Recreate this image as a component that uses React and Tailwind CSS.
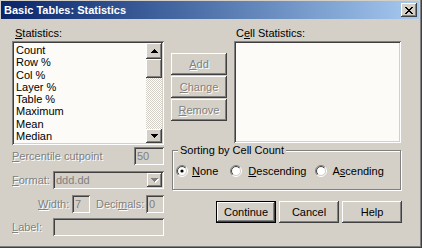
import React from 'react';

const FACE = 'bg-[#d4d0c8]';
const RAISED = 'shadow-[inset_-1px_-1px_0_#404040,inset_1px_1px_0_#ffffff,inset_-2px_-2px_0_#808080,inset_2px_2px_0_#d4d0c8]';
const SUNKEN = 'shadow-[inset_1px_1px_0_#808080,inset_-1px_-1px_0_#ffffff,inset_2px_2px_0_#404040,inset_-2px_-2px_0_#d4d0c8]';
const DIM = 'text-[#808080] [text-shadow:1px_1px_0_#ffffff]';

const STATS = ['Count', 'Row %', 'Col %', 'Layer %', 'Table %', 'Maximum', 'Mean', 'Median'];

function Arrow({ down = false, fill = '#000000' }) {
  const d = down
    ? 'M0 0h7v1h-7z M1 1h5v1h-5z M2 2h3v1h-3z M3 3h1v1h-1z'
    : 'M3 0h1v1h-1z M2 1h3v1h-3z M1 2h5v1h-5z M0 3h7v1h-7z';
  return (
    <svg width="7" height="4" viewBox="0 0 7 4" shapeRendering="crispEdges">
      <path d={d} fill={fill} />
    </svg>
  );
}

function CloseGlyph() {
  return (
    <svg width="8" height="7" viewBox="0 0 8 7" shapeRendering="crispEdges">
      <path
        fill="#000000"
        d="M0 0h2v1h-2z M6 0h2v1h-2z M1 1h2v1h-2z M5 1h2v1h-2z M2 2h4v1h-4z M3 3h2v1h-2z M2 4h4v1h-4z M1 5h2v1h-2z M5 5h2v1h-2z M0 6h2v1h-2z M6 6h2v1h-2z"
      />
    </svg>
  );
}

function Radio({ id, checked }) {
  return (
    <svg width="12" height="12" viewBox="0 0 12 12" className="shrink-0">
      <defs>
        <linearGradient id={`o${id}`} x1="0" y1="0" x2="1" y2="1">
          <stop offset="0.5" stopColor="#808080" />
          <stop offset="0.5" stopColor="#ffffff" />
        </linearGradient>
        <linearGradient id={`i${id}`} x1="0" y1="0" x2="1" y2="1">
          <stop offset="0.5" stopColor="#404040" />
          <stop offset="0.5" stopColor="#d4d0c8" />
        </linearGradient>
      </defs>
      <circle cx="6" cy="6" r="5.5" fill="none" stroke={`url(#o${id})`} strokeWidth="1" />
      <circle cx="6" cy="6" r="4.5" fill="#ffffff" stroke={`url(#i${id})`} strokeWidth="1" />
      {checked && <circle cx="6" cy="6" r="1.6" fill="#000000" />}
    </svg>
  );
}

function Mn({ children }) {
  return <u className="underline-offset-[1px]">{children}</u>;
}

function SideButton({ children }) {
  return (
    <div className={`flex h-[22px] items-center justify-center ${RAISED} ${DIM}`}>{children}</div>
  );
}

function PushButton({ children, isDefault = false }) {
  if (isDefault) {
    return (
      <div className="h-[22px] w-[60px] border border-black">
        <div className={`flex h-full items-center justify-center ${RAISED}`}>{children}</div>
      </div>
    );
  }
  return (
    <div className={`flex h-[22px] w-[60px] items-center justify-center ${RAISED}`}>{children}</div>
  );
}

function Field({ className = '', children }) {
  return (
    <div className={`flex h-[18px] items-center pl-[3px] ${SUNKEN} ${className}`}>
      <span className="text-[#808080]">{children}</span>
    </div>
  );
}

export default function App() {
  return (
    <div
      className={`h-[248px] w-[422px] overflow-hidden ${FACE} font-['Liberation_Sans',Arial,sans-serif] text-[11px] leading-[13px] text-black`}
    >
      <div className="h-full border-r border-b border-r-[#404040] border-b-[#404040]">
        <div className="flex h-full flex-col border-r border-b border-r-[#808080] border-b-[#808080] px-[1px] pt-[1px]">
          {/* title bar */}
          <div className="flex h-[18px] items-center bg-linear-to-r from-[#0a246a] to-[#a6caf0] pl-[3px] pr-[2px]">
            <span className="font-bold text-white">Basic Tables: Statistics</span>
            <div className={`ml-auto flex h-[14px] w-[16px] items-center justify-center ${FACE} ${RAISED}`}>
              <CloseGlyph />
            </div>
          </div>

          <div className="flex pl-[11px]">
            {/* left column */}
            <div className="flex w-[152px] flex-col">
              <div className="mt-[8px] h-[13px] pl-[3px]">
                <Mn>S</Mn>tatistics:
              </div>
              <div className={`mt-[1px] flex h-[104px] bg-[#fcfbf7] p-[2px] ${SUNKEN}`}>
                <div className="flex-1 pt-[1px] pl-[2px]">
                  {STATS.map((s) => (
                    <div key={s} className="h-[12.3px] leading-[12px]">{s}</div>
                  ))}
                </div>
                <div className="flex w-[16px] flex-col">
                  <div className={`flex h-[16px] items-center justify-center ${FACE} ${RAISED}`}>
                    <Arrow />
                  </div>
                  <div className={`h-[19px] ${FACE} ${RAISED}`} />
                  <div className="flex-1 bg-[repeating-conic-gradient(#ffffff_0_25%,#d4d0c8_0_50%)] bg-[length:2px_2px]" />
                  <div className={`flex h-[14px] items-center justify-center ${FACE} ${RAISED}`}>
                    <Arrow down />
                  </div>
                </div>
              </div>

              <div className="mt-[2px] flex h-[18px] items-center">
                <span className={`flex-1 ${DIM}`}>
                  <Mn>P</Mn>ercentile cutpoint
                </span>
                <Field className="w-[30px]">50</Field>
              </div>

              <div className="mt-[6px] flex h-[18px] items-center">
                <span className={`w-[41px] ${DIM}`}>
                  <Mn>F</Mn>ormat:
                </span>
                <div className={`flex h-[18px] flex-1 items-center pl-[3px] pr-[2px] ${SUNKEN}`}>
                  <span className="flex-1 text-[#808080]">ddd.dd</span>
                  <div className={`flex h-[14px] w-[15px] items-center justify-center ${RAISED}`}>
                    <svg width="8" height="5" viewBox="0 0 8 5" shapeRendering="crispEdges">
                      <path d="M1 1h7v1h-7z M2 2h5v1h-5z M3 3h3v1h-3z M4 4h1v1h-1z" fill="#ffffff" />
                      <path d="M0 0h7v1h-7z M1 1h5v1h-5z M2 2h3v1h-3z M3 3h1v1h-1z" fill="#808080" />
                    </svg>
                  </div>
                </div>
              </div>

              <div className="mt-[6px] flex h-[18px] items-center">
                <span className={`ml-[26px] w-[34px] ${DIM}`}>
                  <Mn>W</Mn>idth:
                </span>
                <Field className="w-[18px]">7</Field>
                <span className={`ml-[6px] flex-1 ${DIM}`}>
                  Deci<Mn>m</Mn>als:
                </span>
                <Field className="w-[18px]">0</Field>
              </div>

              <div className="mt-[5px] flex h-[18px] items-center">
                <span className={`w-[41px] ${DIM}`}>
                  <Mn>L</Mn>abel:
                </span>
                <div className={`h-[18px] flex-1 ${SUNKEN}`} />
              </div>
            </div>

            {/* right area */}
            <div className="ml-[7px] flex w-[231px] flex-col">
              <div className="flex">
                <div className="mt-[34px] flex w-[56px] flex-col gap-[1px]">
                  <SideButton>
                    <Mn>A</Mn>dd
                  </SideButton>
                  <SideButton>
                    <Mn>C</Mn>hange
                  </SideButton>
                  <SideButton>
                    <Mn>R</Mn>emove
                  </SideButton>
                </div>
                <div className="ml-[7px] flex w-[167px] flex-col">
                  <div className="mt-[8px] h-[13px] pl-[2px]">
                    C<Mn>e</Mn>ll Statistics:
                  </div>
                  <div className={`mt-[1px] h-[102px] bg-[#fcfbf7] ${SUNKEN}`} />
                </div>
              </div>

              <div className="relative mt-[7px] ml-[1px] flex h-[40px] w-[229px] items-center border border-[#808080] pl-[3px] shadow-[inset_1px_1px_0_#ffffff,1px_1px_0_#ffffff]">
                <span className={`absolute -top-[7px] left-[5px] ${FACE} px-[2px]`}>Sorting by Cell Count</span>
                <div className="mt-[2px] flex items-center">
                  <Radio id="none" checked />
                  <span className="ml-[4px]">
                    <Mn>N</Mn>one
                  </span>
                </div>
                <div className="mt-[2px] ml-[12px] flex items-center">
                  <Radio id="desc" />
                  <span className="ml-[6px]">
                    <Mn>D</Mn>escending
                  </span>
                </div>
                <div className="mt-[2px] ml-[9px] flex items-center">
                  <Radio id="asc" />
                  <span className="ml-[5px]">
                    A<Mn>s</Mn>cending
                  </span>
                </div>
              </div>

              <div className="mt-[11px] flex justify-end gap-[3px]">
                <PushButton isDefault>Continue</PushButton>
                <PushButton>Cancel</PushButton>
                <PushButton>Help</PushButton>
              </div>
            </div>
          </div>
        </div>
      </div>
    </div>
  );
}
